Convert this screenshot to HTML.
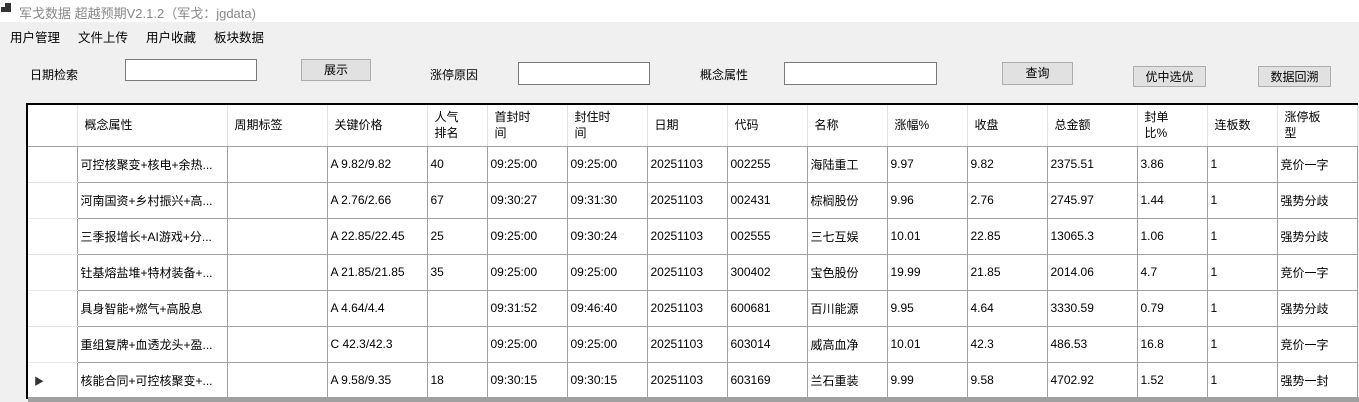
<!DOCTYPE html><html><head><meta charset="utf-8"><style>
*{margin:0;padding:0;box-sizing:border-box}
body{width:1359px;height:402px;overflow:hidden;background:#f0f0f0;font-family:"Liberation Sans","Noto Sans CJK SC",sans-serif;font-size:12px;color:#000;position:relative}
.a{position:absolute;white-space:nowrap}
.title{left:0;top:0;width:1359px;height:22px;background:#fff;color:#888;font-size:13px}
.inp{position:absolute;background:#fff;border:1px solid #7a7a7a}
.btn{position:absolute;background:#e1e1e1;border:1px solid #adadad;text-align:center;font-size:12px}
table{position:absolute;left:26px;top:103px;border-collapse:collapse;background:#fff;table-layout:fixed;border-left:2px solid #000;border-top:2px solid #000}
td{border:1px solid #a0a0a0;height:36px;padding:0 3px;overflow:hidden;white-space:nowrap;font-size:12px}
tr.h td{height:42px;border-color:#e0e0e0;border-bottom-color:#a0a0a0;padding-left:7px;line-height:16px}
td.rh{border-right-color:#a0a0a0;border-top-color:#e6e6e6;border-bottom-color:#e6e6e6}
</style></head><body>
<div class="a title"><span style="position:absolute;left:1px;top:7px;width:5px;height:5px;background:#333"></span><span style="position:absolute;left:5px;top:3px;width:6px;height:9px;background:#333"></span><span style="position:absolute;left:19px;top:3px">军戈数据 超越预期V2.1.2（军戈：jgdata)</span></div>
<div class="a" style="left:10px;top:27px;font-size:12.5px">用户管理</div>
<div class="a" style="left:78px;top:27px;font-size:12.5px">文件上传</div>
<div class="a" style="left:146px;top:27px;font-size:12.5px">用户收藏</div>
<div class="a" style="left:214px;top:27px;font-size:12.5px">板块数据</div>
<div class="a" style="left:30px;top:66px">日期检索</div>
<div class="inp" style="left:125px;top:59px;width:132px;height:22px"></div>
<div class="btn" style="left:301px;top:59px;width:70px;height:22px;line-height:20px">展示</div>
<div class="a" style="left:430px;top:66px">涨停原因</div>
<div class="inp" style="left:518px;top:62px;width:132px;height:23px"></div>
<div class="a" style="left:700px;top:66px">概念属性</div>
<div class="inp" style="left:784px;top:62px;width:153px;height:23px"></div>
<div class="btn" style="left:1002px;top:62px;width:71px;height:23px;line-height:21px">查询</div>
<div class="btn" style="left:1133px;top:66px;width:73px;height:21px;line-height:20px">优中选优</div>
<div class="btn" style="left:1258px;top:66px;width:73px;height:21px;line-height:20px">数据回溯</div>
<table>
<colgroup><col style="width:50px"><col style="width:150px"><col style="width:100px"><col style="width:100px"><col style="width:60px"><col style="width:80px"><col style="width:80px"><col style="width:80px"><col style="width:80px"><col style="width:80px"><col style="width:80px"><col style="width:80px"><col style="width:90px"><col style="width:70px"><col style="width:70px"><col style="width:80px"></colgroup>
<tr class="h"><td class="rh"></td><td>概念属性</td><td>周期标签</td><td>关键价格</td><td>人气<br>排名</td><td>首封时<br>间</td><td>封住时<br>间</td><td>日期</td><td>代码</td><td>名称</td><td>涨幅%</td><td>收盘</td><td>总金额</td><td>封单<br>比%</td><td>连板数</td><td>涨停板<br>型</td></tr>
<tr><td class="rh"></td><td>可控核聚变+核电+余热...</td><td></td><td>A 9.82/9.82</td><td>40</td><td>09:25:00</td><td>09:25:00</td><td>20251103</td><td>002255</td><td>海陆重工</td><td>9.97</td><td>9.82</td><td>2375.51</td><td>3.86</td><td>1</td><td>竞价一字</td></tr>
<tr><td class="rh"></td><td>河南国资+乡村振兴+高...</td><td></td><td>A 2.76/2.66</td><td>67</td><td>09:30:27</td><td>09:31:30</td><td>20251103</td><td>002431</td><td>棕榈股份</td><td>9.96</td><td>2.76</td><td>2745.97</td><td>1.44</td><td>1</td><td>强势分歧</td></tr>
<tr><td class="rh"></td><td>三季报增长+AI游戏+分...</td><td></td><td>A 22.85/22.45</td><td>25</td><td>09:25:00</td><td>09:30:24</td><td>20251103</td><td>002555</td><td>三七互娱</td><td>10.01</td><td>22.85</td><td>13065.3</td><td>1.06</td><td>1</td><td>强势分歧</td></tr>
<tr><td class="rh"></td><td>钍基熔盐堆+特材装备+...</td><td></td><td>A 21.85/21.85</td><td>35</td><td>09:25:00</td><td>09:25:00</td><td>20251103</td><td>300402</td><td>宝色股份</td><td>19.99</td><td>21.85</td><td>2014.06</td><td>4.7</td><td>1</td><td>竞价一字</td></tr>
<tr><td class="rh"></td><td>具身智能+燃气+高股息</td><td></td><td>A 4.64/4.4</td><td></td><td>09:31:52</td><td>09:46:40</td><td>20251103</td><td>600681</td><td>百川能源</td><td>9.95</td><td>4.64</td><td>3330.59</td><td>0.79</td><td>1</td><td>强势分歧</td></tr>
<tr><td class="rh"></td><td>重组复牌+血透龙头+盈...</td><td></td><td>C 42.3/42.3</td><td></td><td>09:25:00</td><td>09:25:00</td><td>20251103</td><td>603014</td><td>威高血净</td><td>10.01</td><td>42.3</td><td>486.53</td><td>16.8</td><td>1</td><td>竞价一字</td></tr>
<tr><td class="rh" style="padding-left:6px;font-size:10px;color:#333">&#9654;</td><td>核能合同+可控核聚变+...</td><td></td><td>A 9.58/9.35</td><td>18</td><td>09:30:15</td><td>09:30:15</td><td>20251103</td><td>603169</td><td>兰石重装</td><td>9.99</td><td>9.58</td><td>4702.92</td><td>1.52</td><td>1</td><td>强势一封</td></tr>
</table>
<div class="a" style="left:28px;top:397px;width:1331px;height:5px;background:#a0a0a0"></div>
</body></html>
